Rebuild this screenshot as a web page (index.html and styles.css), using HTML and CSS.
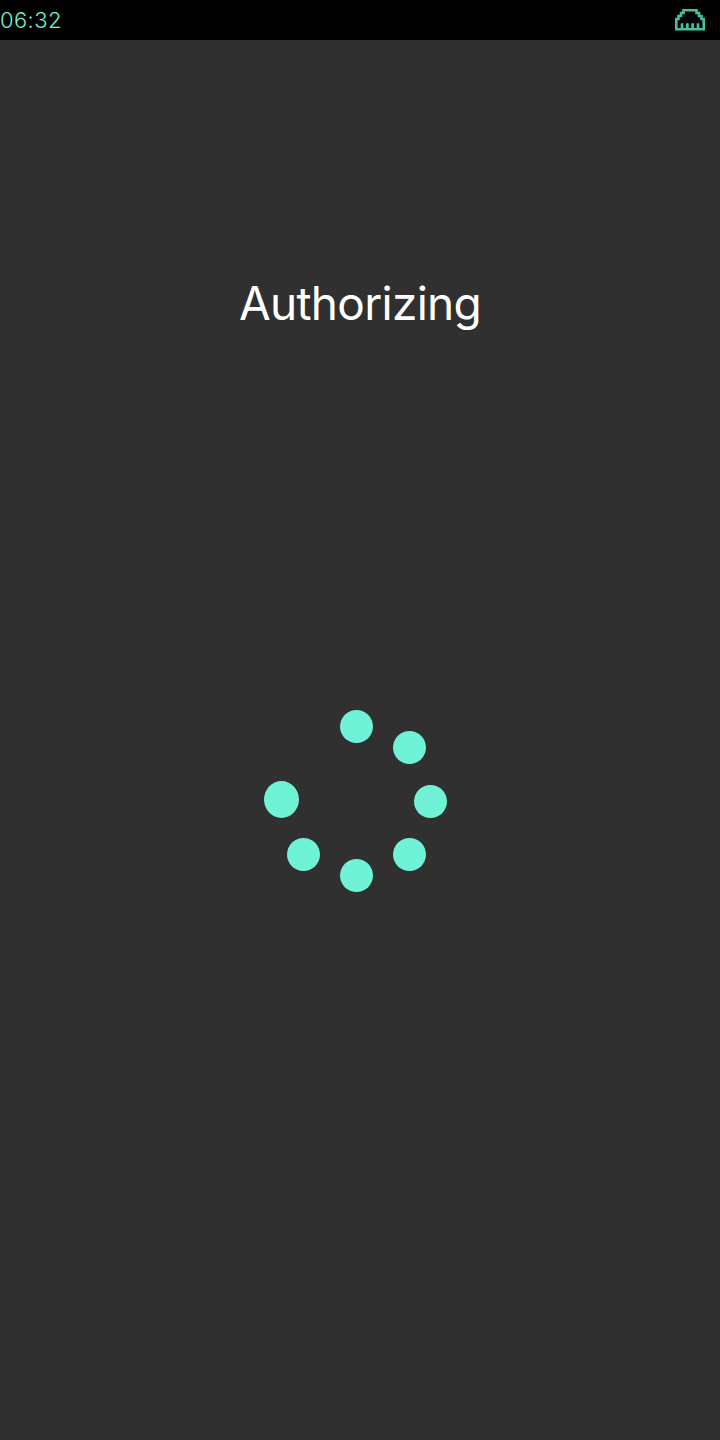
FILE: index.html
```html
<!DOCTYPE html>
<html lang="en">
<head>
  <meta charset="UTF-8">
  <title>Authorizing</title>
  <link rel="stylesheet" href="styles.css">
</head>
<body>
  <header class="status-bar">
    <span class="clock">06:32</span>
    <svg class="net-icon" width="30" height="22" viewBox="0 0 30 22">
      <path class="net-line" d="M1.3 20.3V10H3.5V7H6V4H8.5V1.3H21.5V4H24V7H26.5V10H28.7V20.3Z"/>
      <path class="net-teeth" d="M5.7 14.3H8.3V21H5.7ZM11 14.3H13.7V21H11ZM16.3 14.3H19V21H16.3ZM21.7 14.3H24.3V21H21.7Z"/>
    </svg>
  </header>

  <main class="screen">
    <h1 class="title">Authorizing</h1>
    <div class="spinner">
      <span class="dot dot-top"></span>
      <span class="dot dot-top-right"></span>
      <span class="dot dot-right"></span>
      <span class="dot dot-bottom-right"></span>
      <span class="dot dot-bottom"></span>
      <span class="dot dot-bottom-left"></span>
      <span class="dot dot-left"></span>
    </div>
  </main>
</body>
</html>
```

FILE: styles.css
```css
* {
  margin: 0;
  padding: 0;
  box-sizing: border-box;
}

body {
  width: 720px;
  height: 1440px;
  background: #303030;
  font-family: "Inter", "Liberation Sans", sans-serif;
  overflow: hidden;
}

.status-bar {
  display: flex;
  justify-content: space-between;
  align-items: center;
  height: 40px;
  padding: 0 15px 0 0;
  background: #000;
}

.clock {
  color: #6ff2d6;
  font-size: 22px;
  font-weight: 300;
  letter-spacing: 0.4px;
}

.net-icon {
  display: block;
}

.net-line {
  fill: none;
  stroke: #45bf9f;
  stroke-width: 2.6;
}

.net-teeth {
  fill: #45bf9f;
}

.screen {
  display: flex;
  flex-direction: column;
  align-items: center;
  padding-top: 233px;
}

.title {
  color: #fff;
  font-size: 46px;
  font-weight: 400;
  line-height: 60px;
  letter-spacing: -0.7px;
}

.spinner {
  position: relative;
  width: 184px;
  height: 182px;
  margin-top: 377px;
  margin-left: -8px;
}

.dot {
  position: absolute;
  width: 33px;
  height: 33px;
  border-radius: 50%;
  background: #6ff2d6;
}

.dot-top { left: 75.5px; top: 0; }
.dot-top-right { left: 129px; top: 21px; }
.dot-right { left: 150px; top: 75px; }
.dot-bottom-right { left: 129px; top: 128px; }
.dot-bottom { left: 75.5px; top: 149px; }
.dot-bottom-left { left: 22.5px; top: 128px; }
.dot-left { left: 0; top: 70.5px; width: 35px; height: 37px; }
```
